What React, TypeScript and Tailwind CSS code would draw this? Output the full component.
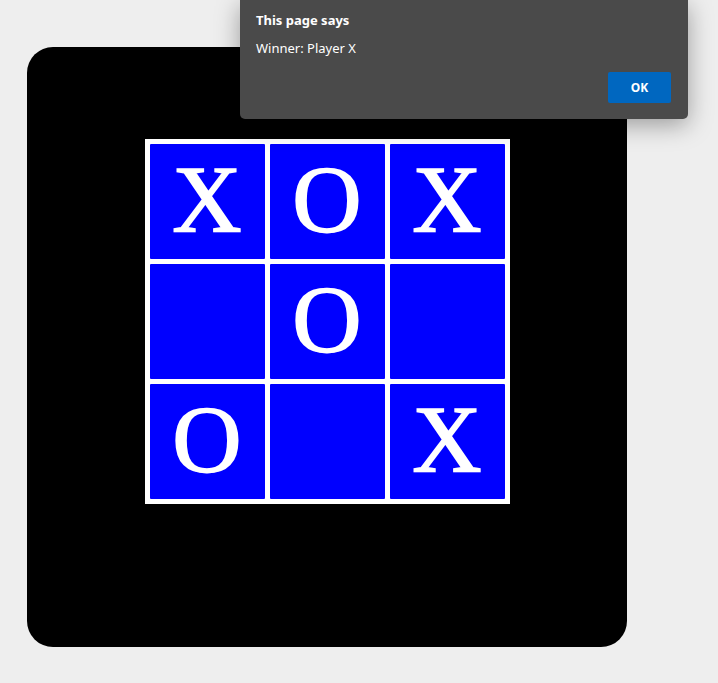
import React from "react";

const board = ["X", "O", "X", "", "O", "", "O", "", "X"];

export default function App() {
  return (
    <div className="relative min-h-screen w-full bg-[#eeeeee] pl-[27px] pt-[47px]">
      <div className="flex h-[600px] w-[600px] justify-center rounded-[26px] bg-black pt-[92px]">
        <div className="grid h-[365px] w-[365px] grid-cols-3 gap-[5px] bg-white p-[5px]">
          {board.map((v, i) => (
            <div
              key={i}
              className="flex h-[115px] w-[115px] items-center justify-center rounded-[1px] bg-[#0000ff] pb-[3px] font-['Times_New_Roman','Liberation_Serif',Times,serif] text-[96px] leading-none text-white [-webkit-text-stroke:1.6px_white]"
            >
              {v}
            </div>
          ))}
        </div>
      </div>

      <div className="absolute left-[240px] top-0 h-[119px] w-[448px] rounded-b-[5px] bg-[#4a4a4a] font-['Noto_Sans','Open_Sans',sans-serif] shadow-[0_6px_24px_rgba(0,0,0,0.35)]">
        <div className="absolute left-[16px] top-[10px] text-[13px] font-bold leading-[20px] text-white">
          This page says
        </div>
        <div className="absolute left-[16px] top-[38px] text-[13px] leading-[20px] text-white">
          Winner: Player X
        </div>
        <div className="absolute left-[368px] top-[72px] flex h-[31px] w-[63px] items-center justify-center rounded-[2px] bg-[#0067c0] text-[12px] font-bold text-white">
          OK
        </div>
      </div>
    </div>
  );
}
